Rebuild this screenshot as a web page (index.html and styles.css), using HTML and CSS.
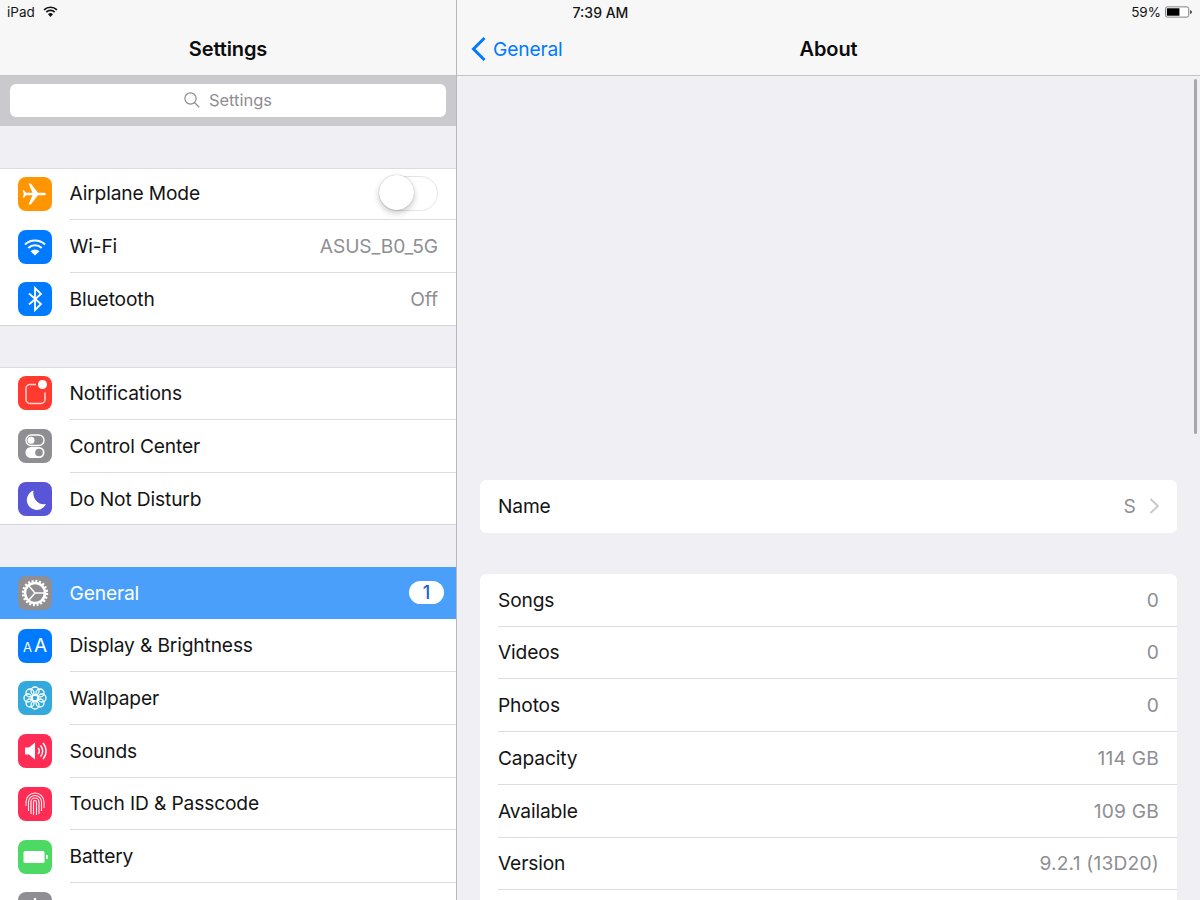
FILE: index.html
```html
<!DOCTYPE html>
<html lang="en">
<head>
<meta charset="utf-8">
<title>About</title>
<link rel="stylesheet" href="styles.css">
</head>
<body>
<div class="app">
  <div class="status">
    <div class="status-left"><span>iPad</span>
      <svg class="wifi-small" viewBox="0 0 16 12"><path d="M1 4.200a10 10 0 0 1 14 0M3.400 6.700a6.600 6.600 0 0 1 9.200 0" fill="none" stroke="#111" stroke-width="1.800"/><path d="M8 12 5.300 9a4 4 0 0 1 5.400 0z" fill="#111"/></svg>
    </div>
    <div class="status-time">7:39 AM</div>
    <div class="status-right"><span>59%</span>
      <svg class="battery-small" viewBox="0 0 29 12"><rect x=".5" y=".5" width="25" height="11" rx="2" fill="#fff" stroke="#777"/><rect x="2" y="2" width="13.5" height="8" fill="#000"/><path d="M27 4c1.200 0 1.800.9 1.800 2s-.6 2-1.800 2z" fill="#333"/></svg>
    </div>
  </div>

  <aside class="sidebar">
    <header class="navbar"><h1 class="nav-title">Settings</h1></header>
    <div class="search-band">
      <div class="search-field">
        <svg class="search-icon" viewBox="0 0 16 16"><circle cx="6.500" cy="6.500" r="5.600" fill="none" stroke="#8e8e93" stroke-width="1.200"/><path d="m10.600 10.600 4.600 4.600" stroke="#8e8e93" stroke-width="1.300"/></svg>
        <span>Settings</span>
      </div>
    </div>

    <section class="group group-first">
      <div class="row">
        <span class="icon orange"><svg viewBox="0 0 34 34"><path d="M8 15.700h6.400L10.600 6.500h2.200l7.200 9.200h5.600c1.500 0 2.400.6 2.400 1.300s-.9 1.300-2.400 1.300H20l-7.200 9.200h-2.200l3.800-9.200H8l-2 2.500H4.800L5.800 17l-1-3.800H6z" fill="#fff"/></svg></span>
        <div class="row-body"><span class="label">Airplane Mode</span><span class="toggle"><span class="knob"></span></span></div>
      </div>
      <div class="row">
        <span class="icon blue"><svg viewBox="0 0 34 34"><path d="M7 14.500a14.500 14.500 0 0 1 20 0M10.300 18a9.700 9.700 0 0 1 13.400 0" fill="none" stroke="#fff" stroke-width="2.100"/><path d="M17 25.500l-4.500-4.300a6.500 6.500 0 0 1 9 0z" fill="#fff"/></svg></span>
        <div class="row-body"><span class="label">Wi-Fi</span><span class="value">ASUS_B0_5G</span></div>
      </div>
      <div class="row">
        <span class="icon blue"><svg viewBox="0 0 34 34"><path d="M11 11.500 23 22l-6 6V6l6 6-12 10.500" fill="none" stroke="#fff" stroke-width="1.800"/></svg></span>
        <div class="row-body last"><span class="label">Bluetooth</span><span class="value">Off</span></div>
      </div>
    </section>

    <section class="group">
      <div class="row">
        <span class="icon red"><svg viewBox="0 0 34 34"><path d="M18 8.500h-6a4 4 0 0 0-4 4v11a4 4 0 0 0 4 4h11a4 4 0 0 0 4-4v-7" fill="none" stroke="#fff" stroke-width="1.500" opacity=".8"/><circle cx="24.500" cy="8.500" r="4.500" fill="#fff"/></svg></span>
        <div class="row-body"><span class="label">Notifications</span></div>
      </div>
      <div class="row">
        <span class="icon gray"><svg viewBox="0 0 34 34"><rect x="8" y="6" width="18" height="10.500" rx="5.250" fill="none" stroke="#fff" stroke-width="1.400"/><circle cx="13" cy="11.200" r="3.500" fill="#fff"/><rect x="7.500" y="18" width="19" height="11" rx="5.500" fill="#fff"/><circle cx="21" cy="23.500" r="3.800" fill="#8e8e93"/></svg></span>
        <div class="row-body"><span class="label">Control Center</span></div>
      </div>
      <div class="row">
        <span class="icon indigo"><svg viewBox="0 0 34 34"><path d="M15.500 8.500a10 10 0 1 0 12.500 13.500c-7 2-14-5-12.500-13.500z" fill="#fff"/></svg></span>
        <div class="row-body last"><span class="label">Do Not Disturb</span></div>
      </div>
    </section>

    <section class="group">
      <div class="row selected">
        <span class="icon gray"><svg viewBox="0 0 34 34"><circle cx="17" cy="17" r="10" fill="none" stroke="#fff" stroke-width="2.600"/><circle cx="17" cy="17" r="12" fill="none" stroke="#fff" stroke-width="2.400" stroke-dasharray="2 1.770"/><path d="M17 17 11 10M17 17h9M17 17l-6 7" stroke="#fff" stroke-width="1.500"/></svg></span>
        <div class="row-body selected-body"><span class="label">General</span><span class="badge">1</span></div>
      </div>
      <div class="row">
        <span class="icon blue aa"><span class="aa-small">A</span><span class="aa-big">A</span></span>
        <div class="row-body"><span class="label">Display &amp; Brightness</span></div>
      </div>
      <div class="row">
        <span class="icon teal"><svg viewBox="0 0 34 34" fill="none" stroke="#fff" stroke-width="1.300"><circle cx="17" cy="17" r="3"/><circle cx="17" cy="10" r="4"/><circle cx="17" cy="24" r="4"/><circle cx="10" cy="17" r="4"/><circle cx="24" cy="17" r="4"/><circle cx="12" cy="12" r="4"/><circle cx="22" cy="12" r="4"/><circle cx="12" cy="22" r="4"/><circle cx="22" cy="22" r="4"/></svg></span>
        <div class="row-body"><span class="label">Wallpaper</span></div>
      </div>
      <div class="row">
        <span class="icon pink"><svg viewBox="0 0 34 34"><path d="M7 13.500h4l6-5v17l-6-5H7z" fill="#fff"/><path d="M20 14a4 4 0 0 1 0 6M22.500 11.500a8 8 0 0 1 0 11M25 9a12 12 0 0 1 0 16" fill="none" stroke="#fff" stroke-width="1.400"/></svg></span>
        <div class="row-body"><span class="label">Sounds</span></div>
      </div>
      <div class="row">
        <span class="icon pink"><svg viewBox="0 0 34 34" fill="none" stroke="#fff" stroke-width="1.100" opacity=".95"><path d="M8 19v-4a9 9 0 0 1 18 0v6"/><path d="M10.500 24v-9a6.500 6.500 0 0 1 13 0v9"/><path d="M13 27V15a4 4 0 0 1 8 0v12"/><path d="M15.500 28V15a1.500 1.500 0 0 1 3 0v13"/></svg></span>
        <div class="row-body"><span class="label">Touch ID &amp; Passcode</span></div>
      </div>
      <div class="row">
        <span class="icon green"><svg viewBox="0 0 34 34"><rect x="5.500" y="11" width="21" height="12" rx="1.500" fill="#fff"/><rect x="28" y="15" width="1.800" height="4" fill="#fff"/></svg></span>
        <div class="row-body"><span class="label">Battery</span></div>
      </div>
      <div class="row">
        <span class="icon gray"><svg viewBox="0 0 34 34"><path d="M13 9v12M17 6v14M21 8v13" stroke="#fff" stroke-width="2.200"/></svg></span>
        <div class="row-body last"></div>
      </div>
    </section>
  </aside>

  <main class="detail">
    <header class="navbar detail-nav">
      <a class="back"><svg class="back-chevron" viewBox="0 0 16 26"><path d="M13.500 2 2.500 13l11 11" fill="none" stroke="#007aff" stroke-width="3"/></svg><span>General</span></a>
      <h1 class="nav-title">About</h1>
    </header>
    <div class="detail-scroll">
      <div class="scrollbar"></div>
      <section class="card card-name">
        <div class="card-row last"><span class="label">Name</span><span class="value">S<svg class="chevron" viewBox="0 0 10 16"><path d="M1.500 1 9 8l-7.500 7" fill="none" stroke="#c7c7cc" stroke-width="1.800"/></svg></span></div>
      </section>
      <section class="card card-info">
        <div class="card-row"><span class="label">Songs</span><span class="value">0</span></div>
        <div class="card-row"><span class="label">Videos</span><span class="value">0</span></div>
        <div class="card-row"><span class="label">Photos</span><span class="value">0</span></div>
        <div class="card-row"><span class="label">Capacity</span><span class="value">114 GB</span></div>
        <div class="card-row"><span class="label">Available</span><span class="value">109 GB</span></div>
        <div class="card-row"><span class="label">Version</span><span class="value">9.2.1 (13D20)</span></div>
        <div class="card-row last"></div>
      </section>
    </div>
  </main>
</div>
</body>
</html>
```

FILE: styles.css
```css
* { box-sizing: border-box; }
html, body { margin: 0; height: 100%; overflow: hidden; }
body {
  font-family: Inter, "Liberation Sans", sans-serif;
  color: #141414;
  background: #efeff4;
  -webkit-font-smoothing: antialiased;
}
.app {
  position: relative;
  display: grid;
  grid-template-columns: 457px 1fr;
  width: 1200px;
  height: 900px;
  overflow: hidden;
}
.status {
  position: absolute;
  top: 0; left: 0; right: 0;
  height: 24px;
  display: grid;
  grid-template-columns: 1fr auto 1fr;
  align-items: center;
  padding: 0 8px 0 7px;
  font-size: 13.500px;
  z-index: 2;
}
.status-left { display: flex; align-items: center; gap: 8px; }
.status-time { font-size: 14px; font-weight: 500; padding-left: 2px; }
.status-right { display: flex; align-items: center; justify-content: flex-end; gap: 4px; }
.wifi-small { width: 15px; height: 11px; margin-top: -2px; }
.battery-small { width: 27px; height: 12px; }

.sidebar {
  border-right: 1px solid #b9b9bd;
  background: #efeff4;
  height: 900px;
  overflow: hidden;
}
.navbar {
  height: 76px;
  padding-top: 23px;
  background: #f7f7f8;
  border-bottom: 1px solid #c4c4c8;
  display: flex;
  align-items: center;
  justify-content: center;
}
.nav-title { margin: 0; font-size: 20px; font-weight: 600; color: #0c0c0c; letter-spacing: -.1px; }
.search-band {
  height: 50px;
  padding: 8px 10px 9px;
  background: #c9c9ce;
}
.search-field {
  height: 33px;
  padding-bottom: 1px;
  background: #fff;
  border-radius: 6px;
  display: flex;
  align-items: center;
  justify-content: center;
  gap: 9px;
  font-size: 16.500px;
  color: #8e8e93;
}
.search-icon { width: 16px; height: 16px; }

.group {
  margin-top: 41.250px;
  background: #fff;
  box-shadow: inset 0 1px #dcdce0, inset 0 -1px #d4d4d8;
}
.group-first { margin-top: 41.500px; }
.row {
  display: flex;
  align-items: center;
  height: 52.750px;
  padding-left: 18px;
}
.row-body {
  flex: 1;
  height: 100%;
  margin-left: 17.500px;
  padding-right: 18px;
  display: flex;
  align-items: center;
  justify-content: space-between;
  border-bottom: 1px solid #dcdce0;
}
.row-body.last { border-bottom: 0; }
.label { font-size: 19.200px; letter-spacing: -.15px; }
.value { font-size: 19.200px; letter-spacing: -.1px; color: #8e8e93; display: flex; align-items: center; }

.icon {
  flex: none;
  width: 34px;
  height: 34px;
  border-radius: 8px;
  display: flex;
  align-items: center;
  justify-content: center;
}
.icon svg { width: 34px; height: 34px; display: block; }
.orange { background: #ff9500; }
.blue { background: #007aff; }
.red { background: #ff3b30; }
.gray { background: #8e8e93; }
.indigo { background: #5856d6; }
.teal { background: #34aadc; }
.pink { background: #ff2d55; }
.green { background: #4cd964; }
.aa { color: #fff; align-items: baseline; gap: 2px; line-height: 34px; }
.aa-small { font-size: 13px; }
.aa-big { font-size: 19px; }

.selected { background: #4a9ffb; }
.selected-body { border-bottom: 0; padding-right: 12px; }
.selected .label { color: #fff; }
.badge {
  width: 35px;
  height: 23px;
  border-radius: 12px;
  background: #fff;
  color: #1f5fd6;
  font-size: 18px;
  font-weight: 500;
  display: flex;
  align-items: center;
  justify-content: center;
}
.toggle {
  position: relative;
  width: 59px;
  height: 35px;
  border-radius: 18px;
  border: 1.500px solid #e4e4e6;
  background: #fff;
}
.knob {
  position: absolute;
  top: -1.500px;
  left: -1.500px;
  width: 35px;
  height: 35px;
  border-radius: 50%;
  background: #fff;
  box-shadow: 0 3px 6px rgba(0,0,0,.22), 0 0 1px rgba(0,0,0,.35);
}

.detail { height: 900px; overflow: hidden; position: relative; }
.detail-nav { position: relative; }
.back {
  position: absolute;
  left: 14px;
  top: 36px;
  display: flex;
  align-items: center;
  gap: 6px;
  color: #007aff;
  font-size: 19.200px;
  letter-spacing: -.15px;
}
.back-chevron { width: 16px; height: 26px; }
.detail-scroll { position: relative; padding: 404px 23px 0; }
.scrollbar {
  position: absolute;
  top: 3px;
  right: 3px;
  width: 3px;
  height: 355px;
  border-radius: 2px;
  background: #a8a8ac;
}
.card { background: #fff; border-radius: 6px; }
.card-name { margin-bottom: 41px; }
.card-row {
  height: 52.750px;
  margin-left: 18px;
  padding-right: 18px;
  display: flex;
  align-items: center;
  justify-content: space-between;
  border-bottom: 1px solid #dcdce0;
}
.card-row .value { letter-spacing: .2px; }
.card-row.last { border-bottom: 0; }
.chevron { width: 10px; height: 16px; margin-left: 13px; }
```
